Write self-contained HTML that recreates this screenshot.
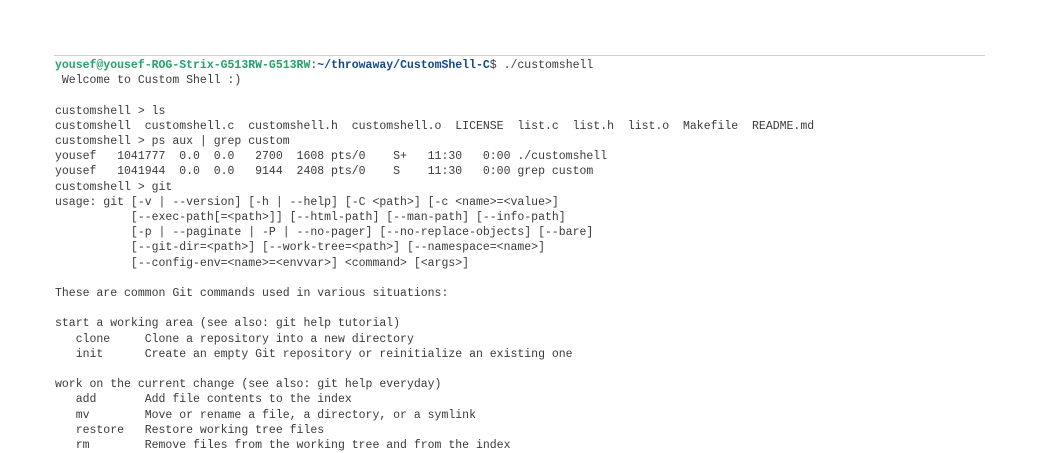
<!DOCTYPE html>
<html><head><style>
body{margin:0;background:#fff;width:1039px;height:449px;overflow:hidden}
.rule{position:absolute;left:54px;top:55px;width:931px;height:1px;background:#d0d0d0}
pre{position:absolute;left:55px;top:58px;margin:0;font-family:"Liberation Mono",monospace;font-size:11.5px;line-height:15.2px;color:#3a3a3a;white-space:pre}
.g{color:#26a269;font-weight:bold}.b{color:#12488b;font-weight:bold}
</style></head><body>
<div class="rule"></div>
<pre><span class="g">yousef@yousef-ROG-Strix-G513RW-G513RW</span>:<span class="b">~/throwaway/CustomShell-C</span>$ ./customshell
 Welcome to Custom Shell :)

customshell > ls
customshell  customshell.c  customshell.h  customshell.o  LICENSE  list.c  list.h  list.o  Makefile  README.md
customshell > ps aux | grep custom
yousef   1041777  0.0  0.0   2700  1608 pts/0    S+   11:30   0:00 ./customshell
yousef   1041944  0.0  0.0   9144  2408 pts/0    S    11:30   0:00 grep custom
customshell > git
usage: git [-v | --version] [-h | --help] [-C &lt;path&gt;] [-c &lt;name&gt;=&lt;value&gt;]
           [--exec-path[=&lt;path&gt;]] [--html-path] [--man-path] [--info-path]
           [-p | --paginate | -P | --no-pager] [--no-replace-objects] [--bare]
           [--git-dir=&lt;path&gt;] [--work-tree=&lt;path&gt;] [--namespace=&lt;name&gt;]
           [--config-env=&lt;name&gt;=&lt;envvar&gt;] &lt;command&gt; [&lt;args&gt;]

These are common Git commands used in various situations:

start a working area (see also: git help tutorial)
   clone     Clone a repository into a new directory
   init      Create an empty Git repository or reinitialize an existing one

work on the current change (see also: git help everyday)
   add       Add file contents to the index
   mv        Move or rename a file, a directory, or a symlink
   restore   Restore working tree files
   rm        Remove files from the working tree and from the index</pre>
</body></html>
